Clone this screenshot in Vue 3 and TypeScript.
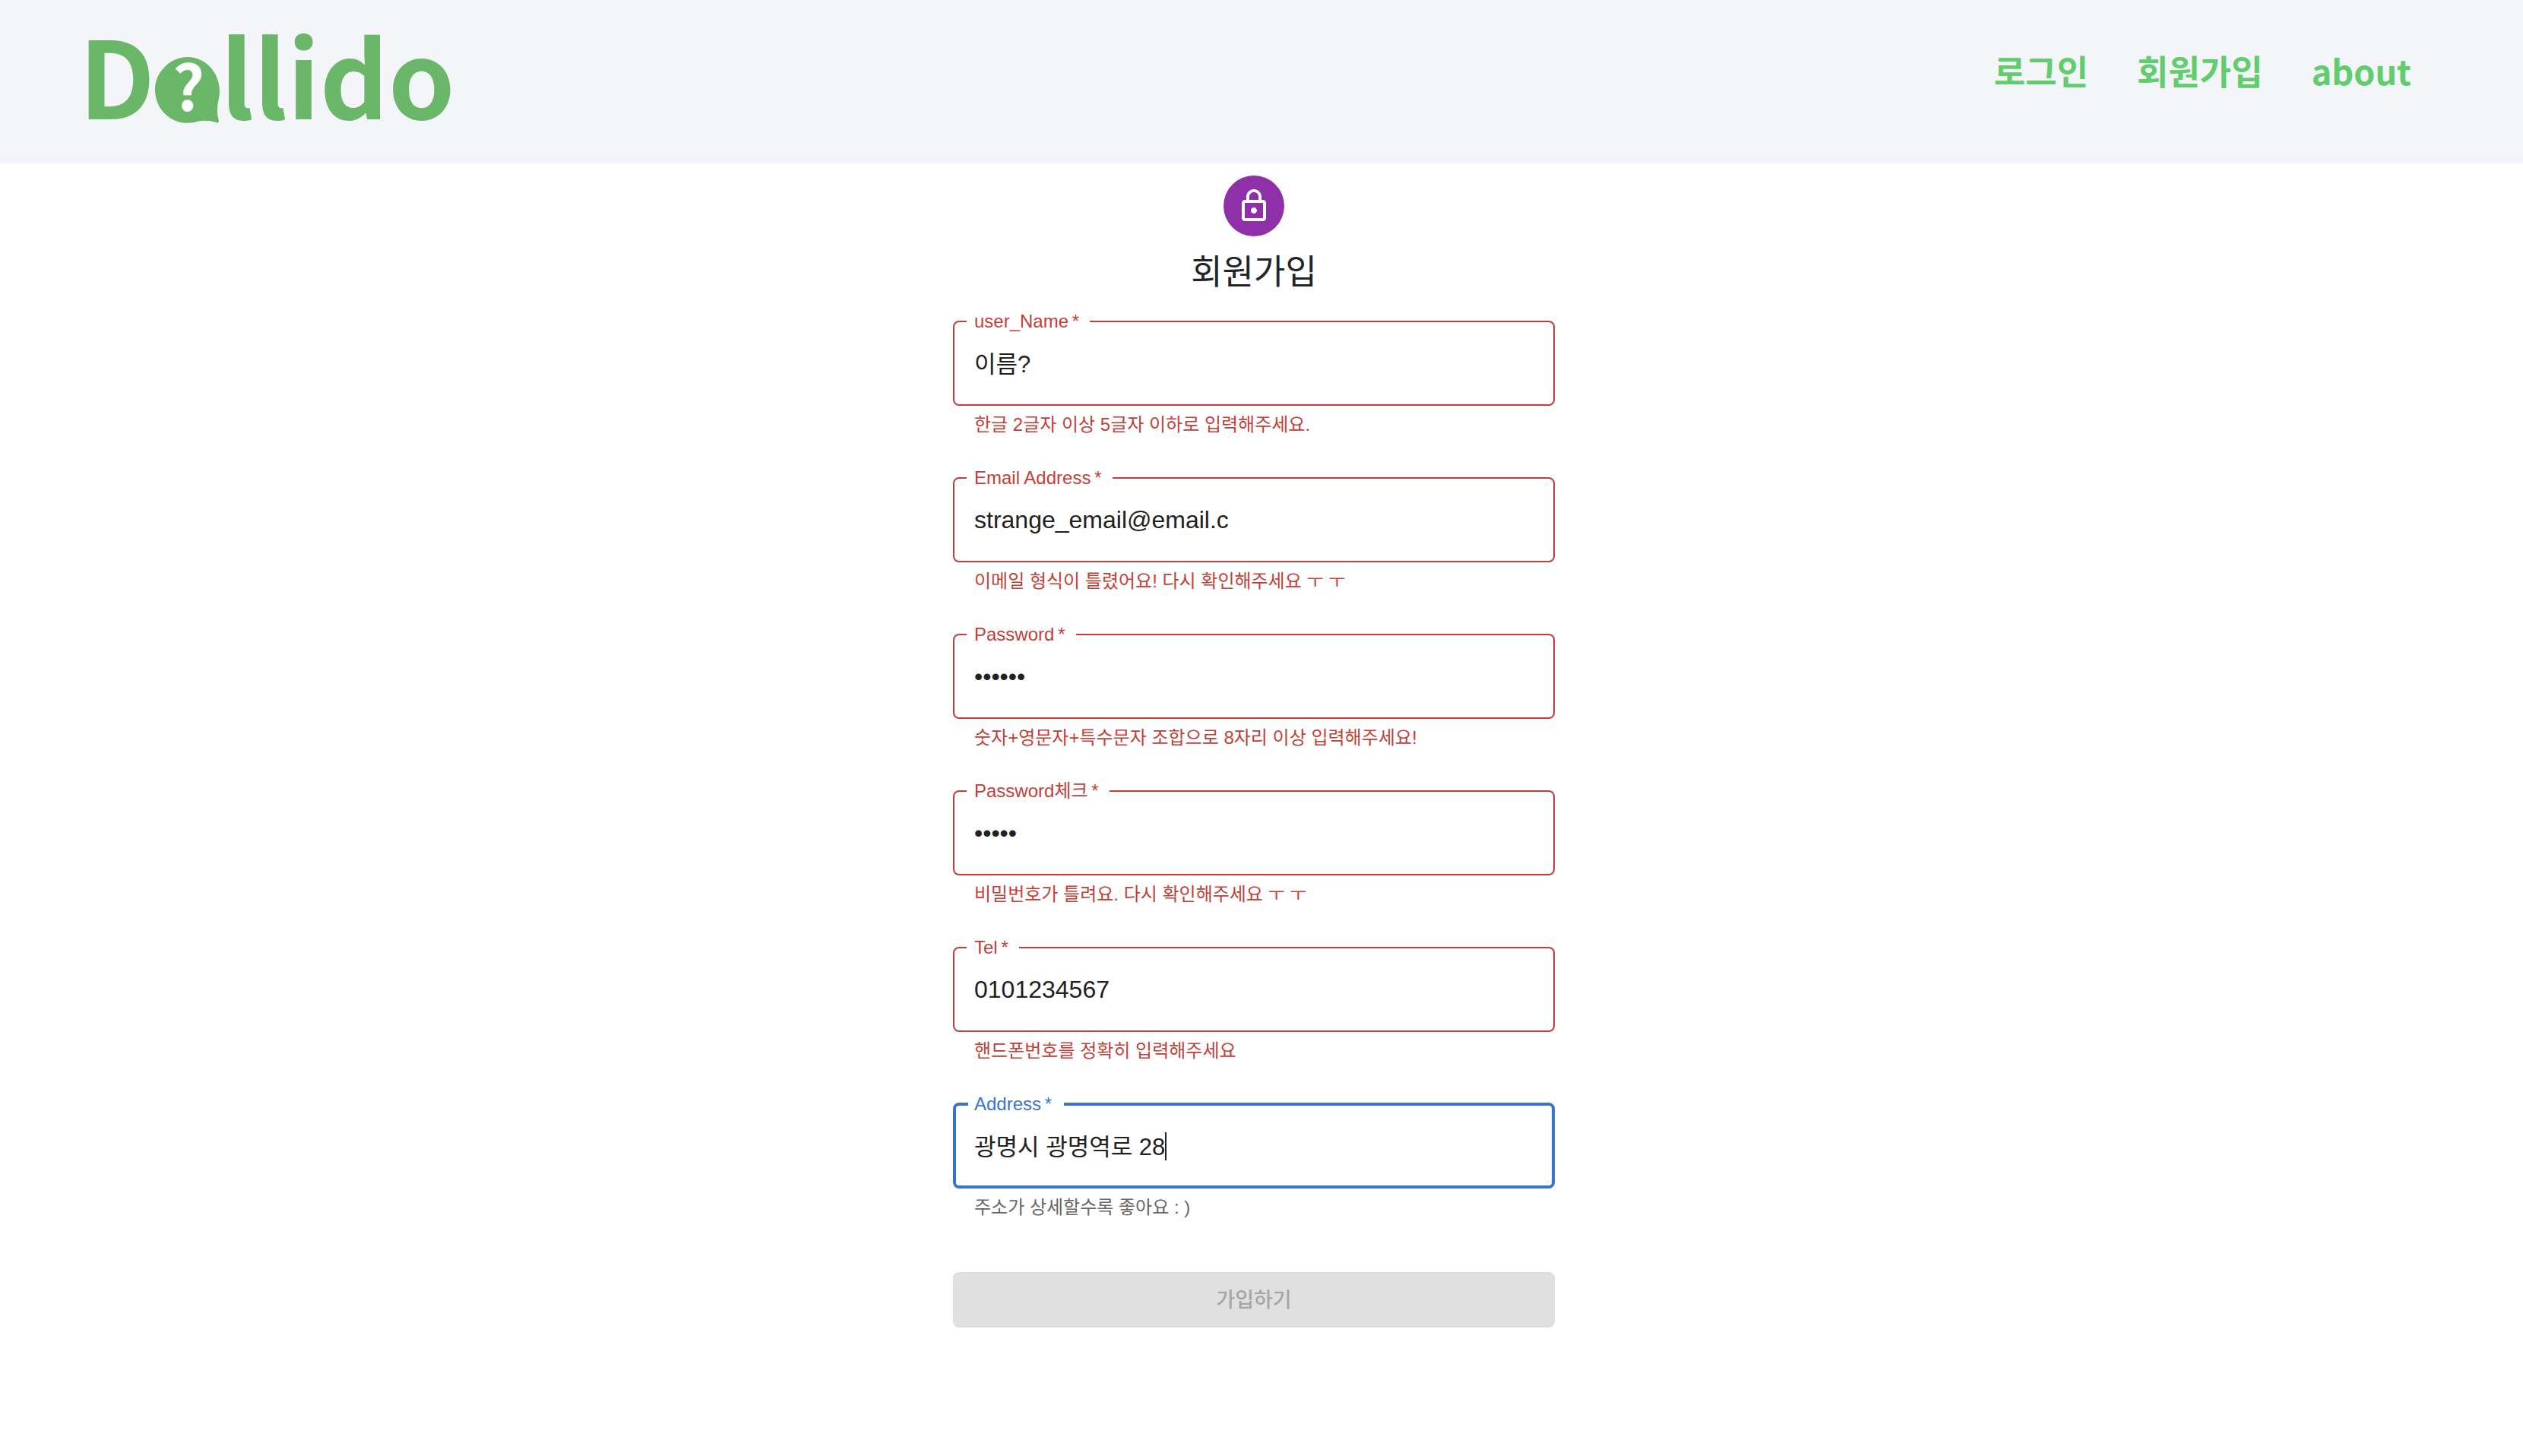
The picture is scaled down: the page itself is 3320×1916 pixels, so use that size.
<script setup lang="ts">
import { ref } from 'vue'

interface Field {
  id: string
  label: string
  type: string
  value: string
  helper: string
  state: 'error' | 'focused'
  lang: string
}

const fields = ref<Field[]>([
  { id: 'name', label: 'user_Name', type: 'text', value: '이름?', helper: '한글 2글자 이상 5글자 이하로 입력해주세요.', state: 'error', lang: 'ko' },
  { id: 'email', label: 'Email Address', type: 'text', value: 'strange_email@email.c', helper: '이메일 형식이 틀렸어요! 다시 확인해주세요 ㅜ ㅜ', state: 'error', lang: 'en' },
  { id: 'password', label: 'Password', type: 'password', value: 'abc123', helper: '숫자+영문자+특수문자 조합으로 8자리 이상 입력해주세요!', state: 'error', lang: 'en' },
  { id: 'password-check', label: 'Password체크', type: 'password', value: 'abc12', helper: '비밀번호가 틀려요. 다시 확인해주세요 ㅜ ㅜ', state: 'error', lang: 'en' },
  { id: 'tel', label: 'Tel', type: 'tel', value: '0101234567', helper: '핸드폰번호를 정확히 입력해주세요', state: 'error', lang: 'en' },
  { id: 'address', label: 'Address', type: 'text', value: '광명시 광명역로 28', helper: '주소가 상세할수록 좋아요 : )', state: 'focused', lang: 'ko' },
])
</script>

<template>
  <div class="page">
    <header class="header">
      <a class="logo" href="#" aria-label="Dallido">
        <span>D</span>
        <svg class="bubble" viewBox="0 0 86 87" width="86" height="87" aria-hidden="true">
          <path d="M43 0C66 0 85 20 85 45C85 54 82 60 82 70C82 76 83 80 84 84C84 87 82 87 80 86C71 83 61 83 52 86C49 87 36 87 33 86C14 81 0 64 0 43C0 20 20 0 43 0Z" />
          <text x="23" y="71">?</text>
        </svg>
        <span>llido</span>
      </a>
      <nav class="nav">
        <a href="#">로그인</a>
        <a href="#">회원가입</a>
        <a href="#">about</a>
      </nav>
    </header>

    <main class="main">
      <div class="avatar">
        <svg viewBox="0 0 24 24" width="48" height="48" aria-hidden="true">
          <path d="M12 17c1.1 0 2-.9 2-2s-.9-2-2-2-2 .9-2 2 .9 2 2 2zm6-9h-1V6c0-2.760-2.240-5-5-5S7 3.240 7 6v2H6c-1.100 0-2 .9-2 2v10c0 1.100.9 2 2 2h12c1.100 0 2-.9 2-2V10c0-1.100-.9-2-2-2zM8.900 6c0-1.710 1.390-3.100 3.100-3.100s3.100 1.390 3.100 3.100v2H8.900V6zM18 20H6V10h12v10z" />
        </svg>
      </div>
      <h1 class="title">회원가입</h1>

      <form class="form" novalidate @submit.prevent>
        <div v-for="field in fields" :key="field.id" class="field" :class="field.state">
          <fieldset class="outline">
            <legend>
              <label :for="field.id">{{ field.label }}&thinsp;*</label>
            </legend>
            <div class="control">
              <input
                :id="field.id"
                v-model="field.value"
                :type="field.type"
                :lang="field.lang"
                :aria-invalid="field.state === 'error'"
                :aria-describedby="field.id + '-helper'"
                autocomplete="off"
                spellcheck="false"
                required
              />
              <span v-if="field.state === 'focused'" class="caret"></span>
            </div>
          </fieldset>
          <p :id="field.id + '-helper'" class="helper">{{ field.helper }}</p>
        </div>
        <button class="submit" type="submit" disabled>가입하기</button>
      </form>
    </main>
  </div>
</template>

<style>
body {
  margin: 0;
  background: #fff;
}
</style>

<style scoped>
.page {
  font-family: "Liberation Sans", "Noto Sans CJK KR", sans-serif;
  color: #212529;
}

.header {
  display: flex;
  justify-content: space-between;
  align-items: flex-start;
  box-sizing: border-box;
  height: 215px;
  padding: 0 147px 0 104px;
  background: #f3f5f9;
  font-family: "Noto Sans CJK KR", sans-serif;
  font-weight: 700;
}

.logo {
  display: flex;
  align-items: flex-start;
  color: #6ab76a;
  font-size: 140px;
  line-height: 192px;
  text-decoration: none;
}

.bubble {
  margin-top: 75px;
  overflow: visible;
  fill: #6ab76a;
}

.bubble text {
  fill: #fff;
  font-size: 82px;
}

.nav {
  display: flex;
  gap: 64px;
  padding-top: 61px;
}

.nav a {
  color: #61cd6d;
  font-size: 45px;
  line-height: 64px;
  text-decoration: none;
}

.main {
  display: flex;
  flex-direction: column;
  align-items: center;
  padding: 16px 20px 0 0;
}

.avatar {
  display: flex;
  align-items: center;
  justify-content: center;
  width: 80px;
  height: 80px;
  border-radius: 50%;
  background: #9030a8;
}

.avatar svg {
  fill: #fff;
}

.title {
  margin: 12px 0 0;
  font-family: "Noto Sans CJK KR", sans-serif;
  font-size: 45px;
  font-weight: 400;
  line-height: 64px;
}

.form {
  width: 100%;
  max-width: 792px;
  padding-top: 24px;
}

.field {
  margin-bottom: 38px;
}

.outline {
  min-width: 0;
  margin: 0;
  padding: 0 16px 11px;
  border: 2px solid #c23f38;
  border-radius: 8px;
}

.outline legend {
  padding: 0 14px 0 10px;
  color: #c23f38;
  font-size: 24px;
  line-height: 24px;
}

.outline label {
  display: block;
}

.control {
  display: flex;
  align-items: center;
  height: 86px;
  padding: 0 10px;
}

.control input {
  box-sizing: border-box;
  flex: 1;
  min-width: 0;
  height: 50px;
  padding: 0;
  border: 0;
  outline: 0;
  background: transparent;
  color: #212121;
  font-family: inherit;
  font-size: 32px;
}

.control input:lang(ko) {
  padding-bottom: 4px;
  font-size: 31px;
}

.helper {
  margin: 5px 28px 0;
  color: #c23f38;
  font-size: 24px;
  line-height: 40px;
}

.focused .outline {
  padding-bottom: 9px;
  border: 4px solid #3874cb;
}

.focused legend {
  padding: 0 16px 0 8px;
  color: #3874cb;
}

.focused .control {
  padding: 0 8px;
}

.focused input {
  flex: none;
  field-sizing: content;
  caret-color: transparent;
}

.focused .helper {
  color: #666;
}

.caret {
  width: 2px;
  height: 37px;
  background: #212121;
}

.submit {
  display: block;
  width: 100%;
  height: 73px;
  margin-top: 65px;
  padding: 0 0 5px;
  border: 0;
  border-radius: 8px;
  background: #e0e0e0;
  color: #a6a6a6;
  font-family: inherit;
  font-size: 27px;
  font-weight: 500;
}
</style>
